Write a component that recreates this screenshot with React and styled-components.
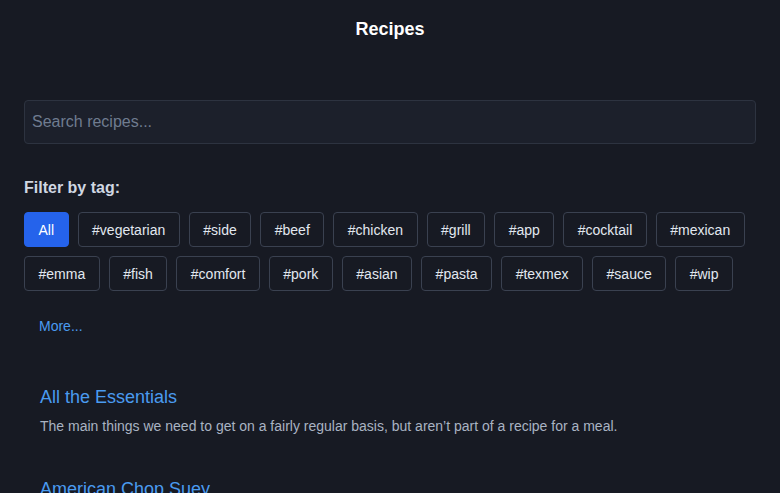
import React from "react";
import styled, { createGlobalStyle } from "styled-components";

const GlobalStyle = createGlobalStyle`
  * { box-sizing: border-box; }
  body {
    margin: 0;
    background: #171a23;
    color: #e2e8f0;
    font-family: "Liberation Sans", Arial, sans-serif;
  }
`;

const Page = styled.div`
  padding: 0 24px;
  height: 493px;
  overflow: hidden;
`;

const Header = styled.h1`
  margin: 0;
  padding-top: 19px;
  height: 100px;
  text-align: center;
  font-size: 18px;
  font-weight: 700;
  color: #ffffff;
`;

const Search = styled.input`
  display: block;
  width: 100%;
  height: 44px;
  padding: 0 7px;
  background: #1c202b;
  border: 1px solid #2d3340;
  border-radius: 4px;
  color: #e2e8f0;
  font-family: inherit;
  font-size: 16px;
  outline: none;

  &::placeholder {
    color: #6f7c90;
  }
`;

const FilterLabel = styled.div`
  margin-top: 35px;
  font-size: 16px;
  font-weight: 700;
  color: #d0d7e2;
`;

const Tags = styled.div`
  display: flex;
  flex-wrap: wrap;
  gap: 9px;
  margin-top: 15px;
`;

const Tag = styled.button`
  height: 35px;
  padding: 0 13.5px;
  border-radius: 4px;
  border: 1px solid ${(p) => (p.$active ? "#2563eb" : "#3a4150")};
  background: ${(p) => (p.$active ? "#2563eb" : "#171a23")};
  color: ${(p) => (p.$active ? "#ffffff" : "#e2e8f0")};
  font-family: inherit;
  font-size: 14px;
  cursor: pointer;
`;

const More = styled.a`
  display: inline-block;
  margin: 27px 0 0 15px;
  font-size: 14px;
  color: #4a9bf0;
  text-decoration: none;
`;

const RecipeList = styled.div`
  margin-top: 52px;
  padding-left: 16px;
  display: flex;
  flex-direction: column;
  gap: 45px;
`;

const Recipe = styled.div``;

const RecipeTitle = styled.a`
  display: block;
  font-size: 18px;
  color: #4a9bf0;
  text-decoration: none;
`;

const RecipeDesc = styled.p`
  margin: 10px 0 0;
  font-size: 14px;
  color: #a9b3c2;
`;

const tags = [
  "vegetarian", "side", "beef", "chicken", "grill", "app", "cocktail", "mexican",
  "emma", "fish", "comfort", "pork", "asian", "pasta", "texmex", "sauce", "wip",
];

const recipes = [
  {
    title: "All the Essentials",
    desc: "The main things we need to get on a fairly regular basis, but aren\u2019t part of a recipe for a meal.",
  },
  { title: "American Chop Suey", desc: "" },
];

export default function App() {
  return (
    <>
      <GlobalStyle />
      <Page>
        <Header>Recipes</Header>
        <Search placeholder="Search recipes..." />
        <FilterLabel>Filter by tag:</FilterLabel>
        <Tags>
          <Tag $active>All</Tag>
          {tags.map((t) => (
            <Tag key={t}>#{t}</Tag>
          ))}
        </Tags>
        <More href="#">More...</More>
        <RecipeList>
          {recipes.map((r) => (
            <Recipe key={r.title}>
              <RecipeTitle href="#">{r.title}</RecipeTitle>
              {r.desc && <RecipeDesc>{r.desc}</RecipeDesc>}
            </Recipe>
          ))}
        </RecipeList>
      </Page>
    </>
  );
}
